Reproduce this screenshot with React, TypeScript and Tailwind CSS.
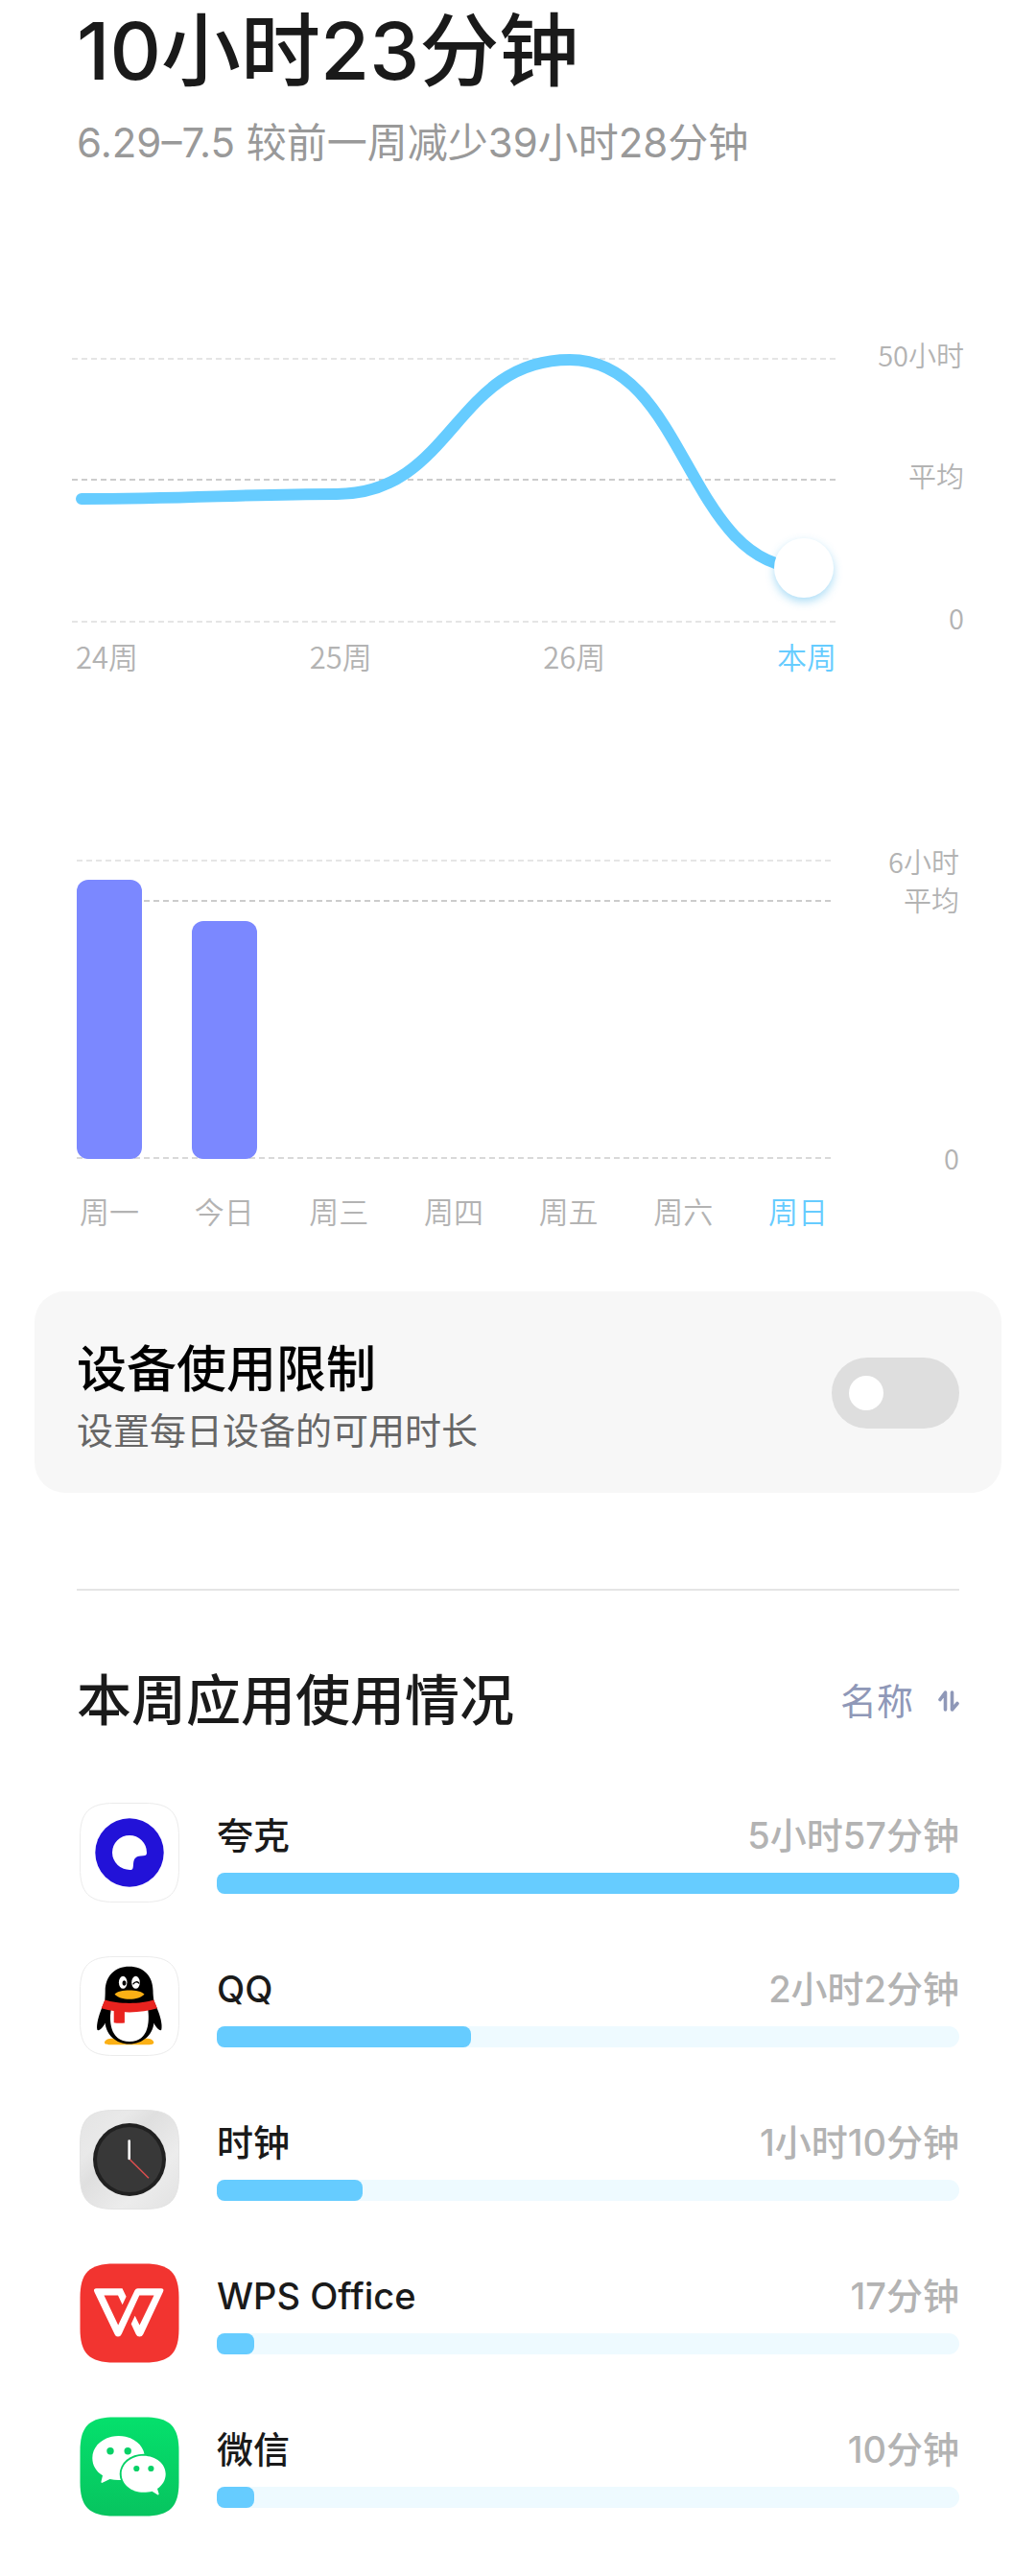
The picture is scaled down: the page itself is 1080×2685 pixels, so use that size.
import { useState } from 'react';
import type { ReactNode } from 'react';

const SQUIRCLE =
  'M36 .5H68C94 .5 103.5 10 103.5 36V68C103.5 94 94 103.5 68 103.5H36C10 103.5 .5 94 .5 68V36C.5 10 10 .5 36 .5Z';

function IconTile({ fill, stroke, children }: { fill: string; stroke?: string; children: ReactNode }) {
  return (
    <svg viewBox="0 0 104 104" className="ml-[3px] size-[104px] shrink-0" aria-hidden="true">
      <defs>
        <linearGradient id="tile-silver" x1="0" y1="0" x2="1" y2="1">
          <stop offset="0" stopColor="#e4e4e4" />
          <stop offset=".25" stopColor="#e9e9e9" />
          <stop offset=".4" stopColor="#dfdfdf" />
          <stop offset=".7" stopColor="#ececec" />
          <stop offset="1" stopColor="#e2e2e2" />
        </linearGradient>
        <linearGradient id="tile-green" x1="0" y1="0" x2="0" y2="1">
          <stop offset="0" stopColor="#05e06c" />
          <stop offset="1" stopColor="#07c45f" />
        </linearGradient>
      </defs>
      <path d={SQUIRCLE} fill={fill} stroke={stroke} />
      {children}
    </svg>
  );
}

function QuarkIcon() {
  return (
    <IconTile fill="#fff" stroke="#ebebeb">
      <circle cx="52" cy="52" r="35.7" fill="#2212d8" />
      <path
        d="M52 34A18 18 0 0 1 70 52C70 54.6 69 55 66.5 55.2C59 55.6 56.6 57 56 64C55.8 68.5 55.4 70 53 70A18.2 18.2 0 0 1 34 52A18 18 0 0 1 52 34Z"
        fill="#fff"
      />
    </IconTile>
  );
}

function QQIcon() {
  return (
    <IconTile fill="#fff" stroke="#ebebeb">
      <path d="M26 90C26 86 33 85 38 86H65C71 85 77.3 86 77.3 90C77.3 92 74 92.3 70 92.3H34C29 92.3 26 92 26 90Z" fill="#fbb015" />
      <path
        d="M51.7 10.7C67 10.7 76.5 21 76.5 36C76.5 40 77 43 77.3 46L81 55C84 62 86.5 71 85.3 76.5C84.5 79 79 74 77.5 69.5C76 82 66 91.5 51.7 91.5C38 91.5 28 82 26.500 69.500C25 74 19.500 79 18.300 76.500C17.300 71 20 62 22.700 55L26.300 46C26.500 43 26.700 40 26.700 36C26.700 21 36.500 10.700 51.700 10.700Z"
        fill="#000"
      />
      <path d="M33 54C30.500 66 31 89 52 89S73 66 71 54Z" fill="#fff" />
      <path d="M26.300 45.500C40 50 64 50 77.300 45.500L80.900 54.300C64 59.800 40 59.800 22.700 54.300Z" fill="#e9231f" />
      <path d="M35.700 55L46.900 57V69.500C43 70 39 70 35.700 69.200Z" fill="#e9231f" />
      <ellipse cx="45.200" cy="27.300" rx="4.300" ry="6.500" fill="#fff" />
      <ellipse cx="58.500" cy="27.300" rx="4.300" ry="6.500" fill="#fff" />
      <ellipse cx="46.500" cy="28" rx="2" ry="2.700" fill="#000" />
      <path d="M56 28.800C57.500 26.400 60 26.200 61.800 28" fill="none" stroke="#000" strokeWidth="1.400" strokeLinecap="round" />
      <path d="M36.500 39.500C41 34 62.500 34 67.500 39.500C62 46.500 42 46.500 36.500 39.500Z" fill="#fbb015" />
    </IconTile>
  );
}

function ClockIcon() {
  return (
    <IconTile fill="url(#tile-silver)" stroke="#e3e3e3">
      <circle cx="52" cy="52" r="38" fill="#212121" />
      <circle cx="52" cy="52" r="34" fill="#383838" />
      <path d="M51.700 32.500V51" stroke="#fff" strokeWidth="2.600" strokeLinecap="round" />
      <path d="M52.500 52L72 71.300" stroke="#dd4f4f" strokeWidth="1.500" />
    </IconTile>
  );
}

function WpsIcon() {
  return (
    <IconTile fill="#f23430">
      <g fill="#fff" fillRule="evenodd">
        <path d="M17.500 26.300H44.500L48.600 34.800L44.600 43.200L40 33.500H25.500L40.200 64.500L57.500 28.300Q58.500 26.300 60.700 26.300H85Q88.500 26.300 87 29.800L66.300 74Q65.200 76.500 62.500 76.500T58.700 74L53.700 63.200L57.700 54.800L62.500 64.500L77.500 33.500H62.300L43.700 74Q42.500 76.500 40 76.500T36.500 74L15.300 29.800Q14 26.300 17.500 26.300Z" />
      </g>
    </IconTile>
  );
}

function WeChatIcon() {
  return (
    <IconTile fill="url(#tile-green)">
      <path d="M40.700 20C56 20 68 30 68 43S56 66 40.700 66C37.500 66 34.500 65.700 31.500 65L23.800 68.800C22.700 69.200 22.300 68.500 22.500 67.500L24 61.300C17 57 13.300 50.500 13.300 43C13.300 30 25.500 20 40.700 20Z" fill="#fff" />
      <ellipse cx="66.700" cy="59.700" rx="25" ry="21" fill="#06d166" />
      <path d="M66.700 40.700C79.500 40.700 89.700 49 89.700 59.700C89.700 66 86.300 71.500 81 75L82.600 80.300C82.800 81.300 82 81.700 81.200 81.200L75.500 77.700C72.800 78.500 69.800 78.800 66.700 78.800C54 78.800 43.700 70.500 43.700 59.700S54 40.700 66.700 40.700Z" fill="#fff" />
      <g fill="#06d166">
        <circle cx="32" cy="35.700" r="3.700" />
        <circle cx="50.200" cy="35.700" r="3.700" />
        <circle cx="59.300" cy="54" r="3.100" />
        <circle cx="74.400" cy="54" r="3.100" />
      </g>
    </IconTile>
  );
}

function GridLine({ y, color, width = 2 }: { y: number; color: string; width?: number }) {
  return <line x1="0" x2="100%" y1={y} y2={y} stroke={color} strokeWidth={width} strokeDasharray="6 4" />;
}

const WEEKS = ['24周', '25周', '26周', '本周'];

function WeeklyTrend() {
  return (
    <section className="mt-[175px] flex px-[75px] font-['Noto_Sans_CJK_SC',sans-serif] font-[350] text-[#b3b3b3]" aria-label="每周趋势">
      <div className="mt-[19px] flex-1">
        <div className="relative h-[276px]">
          <svg className="block size-full overflow-visible" aria-hidden="true">
            <GridLine y={1} color="#e5e5e5" />
            <GridLine y={127} color="#cccccc" />
            <GridLine y={275} color="#e5e5e5" />
            <svg width="100%" height="276" viewBox="0 0 797 276" preserveAspectRatio="none" className="overflow-visible">
              <path
                d="M10 147C120 147 180 142 276 142C398 142 398 2 519 2C641 2 641 219 763 219"
                fill="none"
                stroke="#66ccff"
                strokeWidth="12"
                strokeLinecap="round"
                vectorEffect="non-scaling-stroke"
              />
            </svg>
          </svg>
          <span className="absolute right-[3px] top-[188px] size-[62px] rounded-full bg-white shadow-[0_4px_10px_rgba(70,180,235,0.45)]" />
        </div>
        <div className="mt-[19px] flex justify-between pl-1 text-[31px] leading-8">
          {WEEKS.map((week) => (
            <span key={week} className={week === '本周' ? 'text-[#66ccff]' : ''}>
              {week}
            </span>
          ))}
        </div>
      </div>
      <div className="flex w-[133px] flex-col text-right text-[29px] leading-[30px]">
        <span>50小时</span>
        <span className="mt-24">平均</span>
        <span className="mt-[118px]">0</span>
      </div>
    </section>
  );
}

const DAYS = [
  { label: '周一', percent: 93.2 },
  { label: '今日', percent: 79.5 },
  { label: '周三', percent: 0 },
  { label: '周四', percent: 0 },
  { label: '周五', percent: 0 },
  { label: '周六', percent: 0 },
  { label: '周日', percent: 0 },
];

function DailyBars() {
  return (
    <section className="mt-[182px] flex px-20 font-['Noto_Sans_CJK_SC',sans-serif] font-[350] text-[#b3b3b3]" aria-label="每日使用时长">
      <div className="mt-[14px] flex-1">
        <div className="relative h-[312px]">
          <svg className="block size-full" aria-hidden="true">
            <GridLine y={1} color="#e5e5e5" />
            <GridLine y={43} color="#cccccc" />
            <GridLine y={311} color="#d9d9d9" />
          </svg>
          <div className="absolute inset-0 flex items-end justify-between">
            {DAYS.map((day) => (
              <div key={day.label} className="w-[68px] rounded-xl bg-[#7b88ff]" style={{ height: `${day.percent}%` }} />
            ))}
          </div>
        </div>
        <div className="mt-[38px] flex justify-between text-[31px] leading-8">
          {DAYS.map((day) => (
            <span
              key={day.label}
              className={day.label === '周日' ? 'w-[68px] text-center text-[#66ccff]' : 'w-[68px] text-center'}
            >
              {day.label}
            </span>
          ))}
        </div>
      </div>
      <div className="flex w-[134px] flex-col text-right text-[29px] leading-[30px]">
        <span>6小时</span>
        <span className="mt-[10px]">平均</span>
        <span className="mt-[239px]">0</span>
      </div>
    </section>
  );
}

function LimitCard() {
  const [enabled, setEnabled] = useState(false);
  return (
    <section className="mx-9 mt-[68px] flex items-center justify-between rounded-[32px] bg-[#f7f7f7] px-11 pb-[37px] pt-[47px]">
      <label htmlFor="device-limit">
        <span className="block text-[52px] font-medium leading-[70px] text-black">设备使用限制</span>
        <span className="block text-[38px] leading-[56px] text-[#666666]">设置每日设备的可用时长</span>
      </label>
      <input
        id="device-limit"
        type="checkbox"
        role="switch"
        checked={enabled}
        onChange={(event) => setEnabled(event.target.checked)}
        className="mb-2 flex h-[74px] w-[133px] shrink-0 appearance-none items-center rounded-full bg-[#dedede] px-[18px] before:size-9 before:rounded-full before:bg-white checked:justify-end checked:bg-[#66ccff]"
      />
    </section>
  );
}

const APPS = [
  { name: '夸克', time: '5小时57分钟', percent: 100, icon: <QuarkIcon /> },
  { name: 'QQ', time: '2小时2分钟', percent: 34.2, icon: <QQIcon /> },
  { name: '时钟', time: '1小时10分钟', percent: 19.6, icon: <ClockIcon /> },
  { name: 'WPS Office', time: '17分钟', percent: 5, icon: <WpsIcon /> },
  { name: '微信', time: '10分钟', percent: 5, icon: <WeChatIcon /> },
];

function AppUsage() {
  return (
    <section className="mx-20 mt-[100px] border-t-2 border-[#e5e5e5] pt-[83px]">
      <div className="flex items-center justify-between">
        <h2 className="text-[57px] font-medium leading-[64px] text-[#1a1a1a]">本周应用使用情况</h2>
        <button type="button" className="flex items-center gap-[26px] text-[38px] leading-[56px] text-[#8f98b8]">
          名称
          <svg viewBox="0 0 22 22" className="size-[22px]" fill="none" stroke="currentColor" strokeWidth="3.600" strokeLinecap="round" strokeLinejoin="round" aria-hidden="true">
            <path d="M7.500 20V2L2 9.500M14.500 2V20L20 13.500" />
          </svg>
        </button>
      </div>
      <ul className="mt-[74px] flex flex-col gap-14">
        {APPS.map((app) => (
          <li key={app.name} className="flex gap-[39px]">
            {app.icon}
            <div className="flex-1 pt-[10px]">
              <div className="flex justify-between text-[38px] font-medium leading-[48px]">
                <span className="text-[#1a1a1a]">{app.name}</span>
                <span className="text-[#b3b3b3]">{app.time}</span>
              </div>
              <div className="mt-[15px] h-[22px] rounded-full bg-[#eefaff]">
                <div className="h-full rounded-lg bg-[#66ccff]" style={{ width: `${app.percent}%` }} />
              </div>
            </div>
          </li>
        ))}
      </ul>
    </section>
  );
}

export default function App() {
  return (
    <main className="min-h-screen bg-white pb-[62px] font-[Inter,'Noto_Sans_CJK_SC',sans-serif]" lang="zh-CN">
      <header className="px-20">
        <h1 className="text-[83px] font-medium leading-[106px] text-[#1a1a1a]">10小时23分钟</h1>
        <p className="mt-[13px] text-[42px] leading-[60px] text-[#999999]">6.29–7.5 较前一周减少39小时28分钟</p>
      </header>
      <WeeklyTrend />
      <DailyBars />
      <LimitCard />
      <AppUsage />
    </main>
  );
}
